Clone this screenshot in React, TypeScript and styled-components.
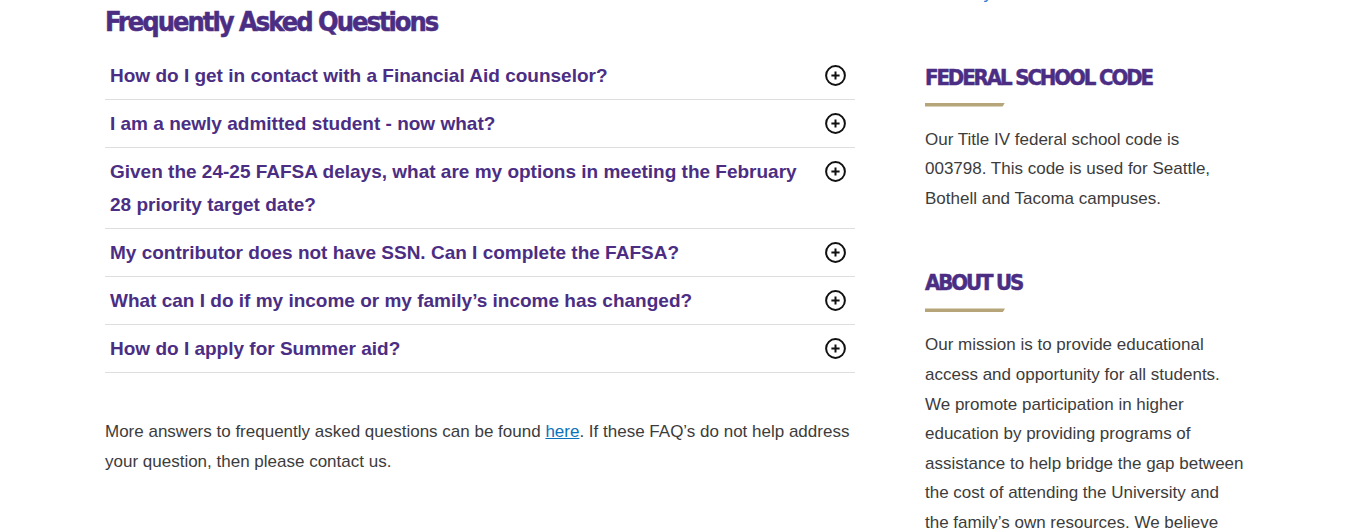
import React from "react";
import styled, { createGlobalStyle } from "styled-components";

const GlobalStyle = createGlobalStyle`
  html, body { margin: 0; padding: 0; background: #ffffff; }
  body {
    font-family: "Liberation Sans", Arial, sans-serif;
    color: #3c3c3c;
    overflow: hidden;
  }
`;

const PURPLE = "#4b2e83";
const GOLD = "#b7a57a";
const LINK = "#0a72b8";

const Page = styled.div`
  display: flex;
  align-items: flex-start;
  gap: 70px;
  padding-left: 105px;
  width: 1347px;
  height: 529px;
  box-sizing: border-box;
  overflow: hidden;
`;

const Main = styled.main`
  width: 750px;
  flex: none;
`;

const Sidebar = styled.aside`
  width: 319px;
  flex: none;
  display: flex;
  flex-direction: column;
`;

const PageTitle = styled.h2`
  margin: 6px 0 15px;
  font-family: "Liberation Sans Narrow", "DejaVu Sans Condensed", "Open Sans", sans-serif;
  font-stretch: condensed;
  font-weight: 700;
  font-size: 27px;
  line-height: 31px;
  letter-spacing: -2px;
  -webkit-text-stroke: 0.5px ${PURPLE};
  color: ${PURPLE};
`;

const Accordion = styled.div`
  display: flex;
  flex-direction: column;
`;

const Item = styled.div`
  display: flex;
  align-items: flex-start;
  padding: 7px 9px 7px 5px;
  border-bottom: 1px solid #dedede;
`;

const Question = styled.button`
  flex: 1;
  margin: 0;
  padding: 0 15px 0 0;
  border: 0;
  background: none;
  text-align: left;
  cursor: pointer;
  font-family: "Liberation Sans", Arial, sans-serif;
  font-weight: 700;
  font-size: 19px;
  line-height: 33px;
  color: ${PURPLE};
`;

const Toggle = styled.svg`
  flex: none;
  width: 21px;
  height: 21px;
  margin-top: 6px;
`;

const BodyText = styled.p<{ $gap?: number }>`
  margin: ${(p) => p.$gap ?? 0}px 0 0;
  font-size: 17px;
  line-height: 29.6px;
  color: #3c3c3c;
`;

const TextLink = styled.a`
  color: ${LINK};
  text-decoration: underline;
`;

const TopLink = styled.a`
  display: block;
  margin-top: -21px;
  font-size: 17px;
  line-height: 29.6px;
  color: #2a7ad6;
  text-decoration: none;
`;

const Section = styled.section<{ $gap: number }>`
  margin-top: ${(p) => p.$gap}px;
  display: flex;
  flex-direction: column;
`;

const SectionTitle = styled.h3`
  margin: 0;
  font-family: "Liberation Sans Narrow", "DejaVu Sans Condensed", "Open Sans", sans-serif;
  font-stretch: condensed;
  font-weight: 700;
  font-size: 22px;
  line-height: 26px;
  letter-spacing: -2.1px;
  -webkit-text-stroke: 0.5px ${PURPLE};
  text-transform: uppercase;
  color: ${PURPLE};
`;

const GoldBar = styled.span`
  display: block;
  width: 80px;
  height: 4px;
  margin-top: 12px;
  background: ${GOLD};
  clip-path: polygon(0 0, 100% 0, 97% 100%, 0 100%);
`;

const PlusCircle = () => (
  <Toggle viewBox="0 0 21 21" aria-hidden="true">
    <circle cx="10.5" cy="10.5" r="9.4" fill="none" stroke="#111" strokeWidth="2" />
    <path d="M10.5 6.4v8.2M6.4 10.5h8.2" stroke="#111" strokeWidth="2" strokeLinecap="butt" />
  </Toggle>
);

const questions = [
  "How do I get in contact with a Financial Aid counselor?",
  "I am a newly admitted student - now what?",
  "Given the 24-25 FAFSA delays, what are my options in meeting the February 28 priority target date?",
  "My contributor does not have SSN. Can I complete the FAFSA?",
  "What can I do if my income or my family\u2019s income has changed?",
  "How do I apply for Summer aid?",
];

export default function App() {
  return (
    <>
      <GlobalStyle />
      <Page>
        <Main>
          <PageTitle>Frequently Asked Questions</PageTitle>
          <Accordion>
            {questions.map((q) => (
              <Item key={q}>
                <Question type="button">{q}</Question>
                <PlusCircle />
              </Item>
            ))}
          </Accordion>
          <BodyText $gap={44}>
            More answers to frequently asked questions can be found{" "}
            <TextLink href="#">here</TextLink>. If these FAQ’s do not help address your
            question, then please contact us.
          </BodyText>
        </Main>
        <Sidebar>
          <TopLink href="#">Glossary</TopLink>
          <Section $gap={56}>
            <SectionTitle>Federal School Code</SectionTitle>
            <GoldBar />
            <BodyText $gap={18}>
              Our Title IV federal school code is 003798. This code is used for Seattle,
              Bothell and Tacoma campuses.
            </BodyText>
          </Section>
          <Section $gap={57}>
            <SectionTitle>About Us</SectionTitle>
            <GoldBar />
            <BodyText $gap={18}>
              Our mission is to provide educational access and opportunity for all
              students. We promote participation in higher education by providing
              programs of assistance to help bridge the gap between the cost of
              attending the University and the family’s own resources. We believe
            </BodyText>
          </Section>
        </Sidebar>
      </Page>
    </>
  );
}
